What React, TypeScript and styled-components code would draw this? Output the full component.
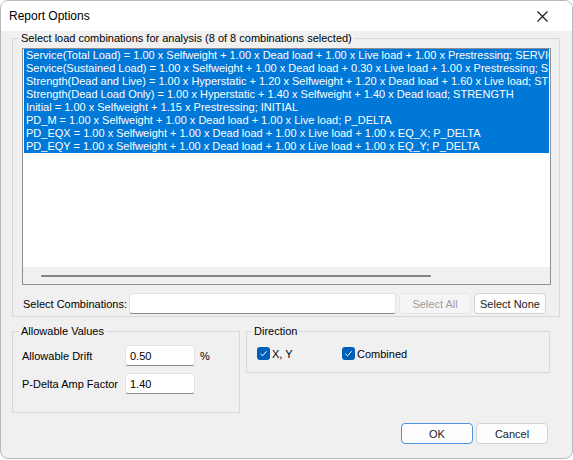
import styled, { createGlobalStyle } from 'styled-components';

const GlobalStyle = createGlobalStyle`
  html, body {
    margin: 0;
    padding: 0;
    background: #ffffff;
  }
  body {
    font-family: "Liberation Sans", Arial, sans-serif;
    font-size: 11px;
    color: #000000;
  }
`;

const combinations = [
  'Service(Total Load) = 1.00 x Selfweight + 1.00 x Dead load + 1.00 x Live load + 1.00 x Prestressing; SERVICE',
  'Service(Sustained Load) = 1.00 x Selfweight + 1.00 x Dead load + 0.30 x Live load + 1.00 x Prestressing; SERVICE',
  'Strength(Dead and Live) = 1.00 x Hyperstatic + 1.20 x Selfweight + 1.20 x Dead load + 1.60 x Live load; STRENGTH',
  'Strength(Dead Load Only) = 1.00 x Hyperstatic + 1.40 x Selfweight + 1.40 x Dead load; STRENGTH',
  'Initial = 1.00 x Selfweight + 1.15 x Prestressing; INITIAL',
  'PD_M = 1.00 x Selfweight + 1.00 x Dead load + 1.00 x Live load; P_DELTA',
  'PD_EQX = 1.00 x Selfweight + 1.00 x Dead load + 1.00 x Live load + 1.00 x EQ_X; P_DELTA',
  'PD_EQY = 1.00 x Selfweight + 1.00 x Dead load + 1.00 x Live load + 1.00 x EQ_Y; P_DELTA',
];

const Window = styled.div`
  width: 573px;
  height: 459px;
  box-sizing: border-box;
  border: 1px solid #b9b9b9;
  border-radius: 8px;
  overflow: hidden;
  background: #f0f0f0;
  display: flex;
  flex-direction: column;
`;

const TitleBar = styled.div`
  height: 30px;
  flex: none;
  background: #ffffff;
  display: flex;
  align-items: center;
  justify-content: space-between;
  padding-left: 8px;
`;

const Title = styled.span`
  font-size: 12px;
  color: #000000;
`;

const CloseButton = styled.div`
  width: 44px;
  height: 30px;
  display: flex;
  align-items: center;
  justify-content: center;
  margin-right: 8px;
`;

const Body = styled.div`
  flex: 1;
  display: flex;
  flex-direction: column;
  padding: 0 12px 0 11px;
`;

const Group = styled.fieldset<{ $width?: number }>`
  margin: 0;
  padding: 0;
  min-width: 0;
  width: ${(p) => (p.$width ? `${p.$width}px` : 'auto')};
  box-sizing: border-box;
  border: 1px solid #d8d8d8;
`;

const Caption = styled.legend<{ $offset: number }>`
  margin-left: ${(p) => p.$offset}px;
  padding: 0 2px;
  line-height: 14px;
  font-size: 11px;
`;

const CombinationsInner = styled.div`
  padding: 3px 8px 2px 9px;
  display: flex;
  flex-direction: column;
`;

const ListBox = styled.div`
  height: 237px;
  box-sizing: border-box;
  border: 1px solid #8c8f96;
  background: #ffffff;
  display: flex;
  flex-direction: column;
`;

const ListItems = styled.div`
  flex: 1;
  padding: 0 1px;
  overflow: hidden;
`;

const ListRow = styled.div<{ $selected: boolean }>`
  height: 13px;
  line-height: 13px;
  padding-left: 2px;
  white-space: nowrap;
  overflow: hidden;
  background: ${(p) => (p.$selected ? '#0078d7' : 'transparent')};
  color: ${(p) => (p.$selected ? '#ffffff' : '#000000')};
`;

const HScroll = styled.div`
  height: 17px;
  flex: none;
  background: #f0f0f0;
  display: flex;
  align-items: center;
  padding-left: 18px;
`;

const HThumb = styled.div`
  width: 390px;
  height: 2px;
  border-radius: 1px;
  background: #858585;
`;

const FilterRow = styled.div`
  margin-top: 8px;
  display: flex;
  align-items: center;
`;

const FilterLabel = styled.span`
  width: 107px;
  padding-left: 1px;
  box-sizing: border-box;
`;

const TextBox = styled.div<{ $width: number }>`
  width: ${(p) => p.$width}px;
  height: 21px;
  box-sizing: border-box;
  background: #ffffff;
  border: 1px solid #e3e3e3;
  border-bottom-color: #8a8a8a;
  border-radius: 3px;
  display: flex;
  align-items: center;
  padding-left: 4px;
`;

const Button = styled.button<{ $primary?: boolean }>`
  width: 72px;
  height: 21px;
  box-sizing: border-box;
  padding: 0;
  font-family: inherit;
  font-size: 11px;
  color: #1b1b1b;
  background: #fdfdfd;
  border: 1px solid ${(p) => (p.$primary ? '#4b95de' : '#d3d3d3')};
  border-radius: 4px;

  &:disabled {
    background: #f5f5f5;
    border-color: #e6e6e6;
    color: #9d9d9d;
  }
`;

const ButtonPair = styled.div`
  margin-left: 3px;
  display: flex;
  gap: 3px;
`;

const LowerRow = styled.div`
  margin-top: 7px;
  display: flex;
  align-items: flex-start;
  gap: 6px;
`;

const ValuesInner = styled.div`
  padding: 7px 9px 18px 9px;
  display: flex;
  flex-direction: column;
  gap: 7px;
`;

const ValueRow = styled.div`
  display: flex;
  align-items: center;
`;

const ValueLabel = styled.span`
  width: 103px;
`;

const Unit = styled.span`
  margin-left: 5px;
`;

const DirectionInner = styled.div`
  padding: 7px 10px 10px 10px;
  display: flex;
  align-items: center;
  height: 17px;
`;

const CheckItem = styled.label<{ $width?: number }>`
  width: ${(p) => (p.$width ? `${p.$width}px` : 'auto')};
  display: flex;
  align-items: center;
  gap: 2px;
`;

const CheckBox = styled.span`
  width: 13px;
  height: 13px;
  border-radius: 3px;
  background: #005fb8;
  display: flex;
  align-items: center;
  justify-content: center;
`;

const Footer = styled.div`
  margin-top: 10px;
  padding-right: 12px;
  display: flex;
  justify-content: flex-end;
  gap: 3px;
`;

function Check() {
  return (
    <CheckBox>
      <svg width="9" height="9" viewBox="0 0 9 9">
        <path d="M1.5 4.8 L3.6 6.8 L7.6 2.2" fill="none" stroke="#ffffff" strokeWidth="1" />
      </svg>
    </CheckBox>
  );
}

export default function App() {
  return (
    <>
      <GlobalStyle />
      <Window>
        <TitleBar>
          <Title>Report Options</Title>
          <CloseButton>
            <svg width="11" height="11" viewBox="0 0 11 11">
              <path d="M0.5 0.5 L10.5 10.5 M10.5 0.5 L0.5 10.5" stroke="#1a1a1a" strokeWidth="1.1" />
            </svg>
          </CloseButton>
        </TitleBar>
        <Body>
          <Group>
            <Caption $offset={6}>Select load combinations for analysis (8 of 8 combinations selected)</Caption>
            <CombinationsInner>
              <ListBox>
                <ListItems>
                  {combinations.map((c) => (
                    <ListRow key={c} $selected>
                      {c}
                    </ListRow>
                  ))}
                </ListItems>
                <HScroll>
                  <HThumb />
                </HScroll>
              </ListBox>
              <FilterRow>
                <FilterLabel>Select Combinations:</FilterLabel>
                <TextBox $width={267} />
                <ButtonPair>
                  <Button disabled>Select All</Button>
                  <Button>Select None</Button>
                </ButtonPair>
              </FilterRow>
            </CombinationsInner>
          </Group>
          <LowerRow>
            <Group $width={228}>
              <Caption $offset={6}>Allowable Values</Caption>
              <ValuesInner>
                <ValueRow>
                  <ValueLabel>Allowable Drift</ValueLabel>
                  <TextBox $width={70}>0.50</TextBox>
                  <Unit>%</Unit>
                </ValueRow>
                <ValueRow>
                  <ValueLabel>P-Delta Amp Factor</ValueLabel>
                  <TextBox $width={70}>1.40</TextBox>
                </ValueRow>
              </ValuesInner>
            </Group>
            <Group $width={304}>
              <Caption $offset={5}>Direction</Caption>
              <DirectionInner>
                <CheckItem $width={85}>
                  <Check />
                  X, Y
                </CheckItem>
                <CheckItem>
                  <Check />
                  Combined
                </CheckItem>
              </DirectionInner>
            </Group>
          </LowerRow>
          <Footer>
            <Button $primary>OK</Button>
            <Button>Cancel</Button>
          </Footer>
        </Body>
      </Window>
    </>
  );
}
